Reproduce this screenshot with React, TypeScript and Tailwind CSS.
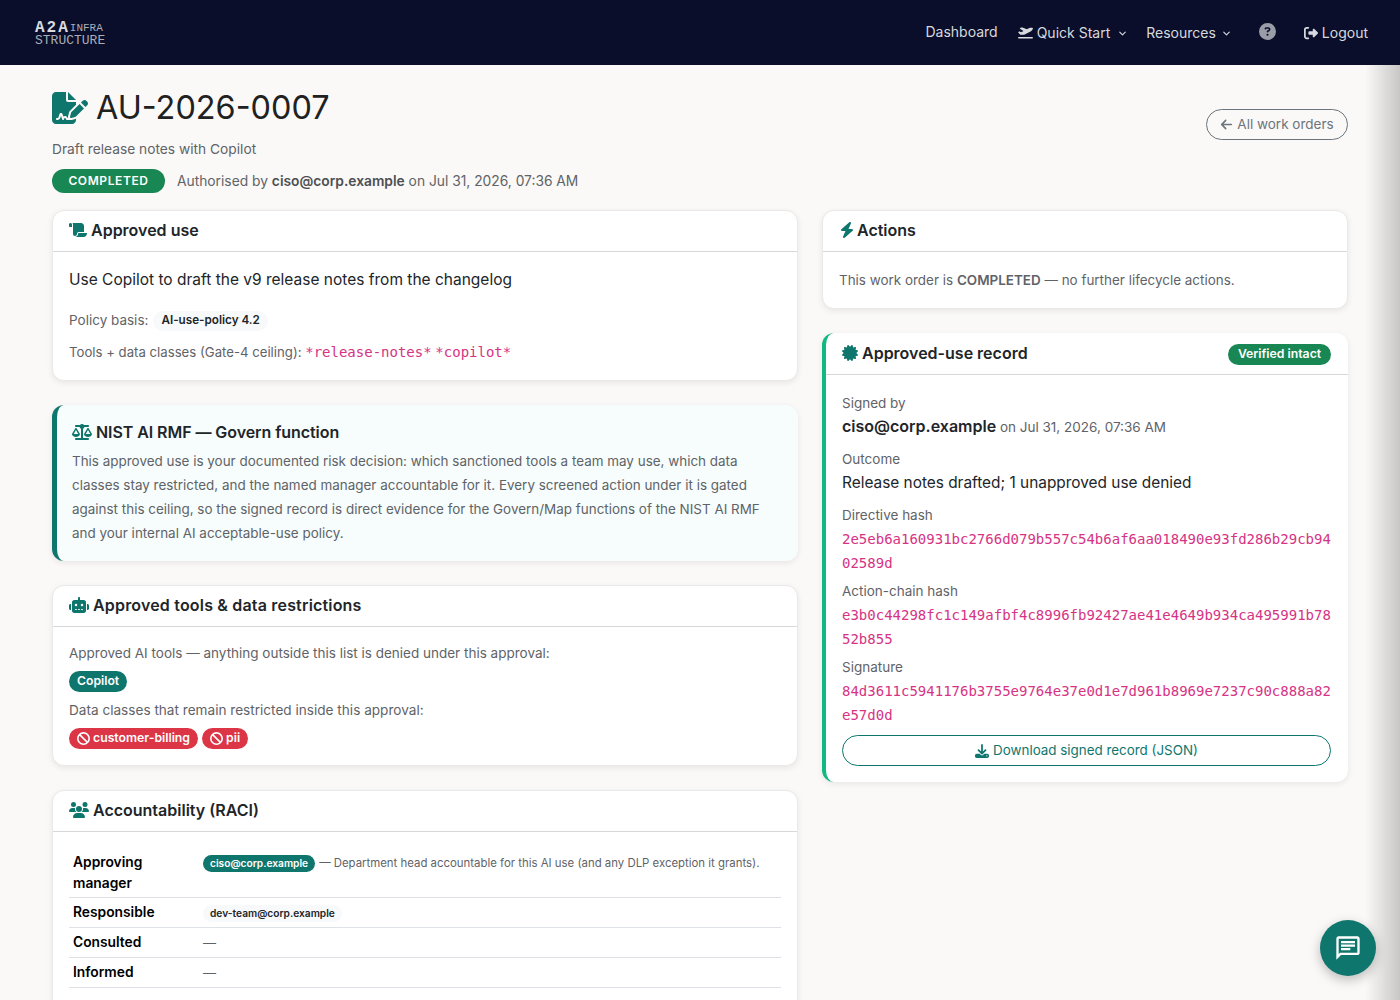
import React from "react";
import { FaFileSignature, FaPlaneDeparture, FaCircleQuestion, FaRightFromBracket, FaArrowLeft, FaScroll, FaScaleBalanced, FaRobot, FaBan, FaUsers, FaBolt, FaCertificate, FaDownload } from "react-icons/fa6";
import { MdOutlineChat } from "react-icons/md";
import { ChevronDown } from "lucide-react";

const mono = "font-['DejaVu_Sans_Mono',monospace] text-[14px] text-[#d63384]";

function Card({ children, className = "" }: { children: React.ReactNode; className?: string }) {
  return <section className={"bg-white rounded-[12px] border border-[#e9e9e9] shadow-[0_2px_6px_rgba(0,0,0,0.08)] overflow-hidden " + className}>{children}</section>;
}

function CardHead({ icon, title, wide }: { icon: React.ReactNode; title: React.ReactNode; wide?: boolean }) {
  return (
    <header className="h-[41px] flex items-center px-4 pb-[2px] border-b border-[#d8d8d8]">
      <h2 className="flex items-center gap-[4px] text-[16px] font-semibold text-[#212529]">
        <span className={"text-[#0f766e] " + (wide ? "text-[20px]" : "text-[18px]")}>{icon}</span>
        {title}
      </h2>
    </header>
  );
}

function Hash({ label, value }: { label: string; value: string }) {
  return (
    <div className="mb-[4px]">
      <div className="text-[13.5px] leading-[24px] text-[#5f6368]">{label}</div>
      <div className={mono + " leading-[24px] break-all"}>{value}</div>
    </div>
  );
}

function RaciRow({ name, children, tall }: { name: string; children: React.ReactNode; tall?: boolean }) {
  return (
    <div className={"flex border-b border-[#dee2e6] px-1 " + (tall ? "h-[49px] pt-1" : "h-[30px] items-center")}>
      <div className={"w-[130px] shrink-0 pr-2 text-[13.8px] font-semibold text-black leading-[21px] " + (tall ? "-mt-[1px]" : "")}>{name}</div>
      <div className={"flex items-center gap-[4px] leading-[21px] text-[11.4px] text-[#5f6368] " + (tall ? "h-[21px]" : "mt-[1px]")}>{children}</div>
    </div>
  );
}

export default function App() {
  return (
    <div className="relative h-[1000px] overflow-hidden bg-[#faf9f7] font-['Inter',sans-serif] text-[#212529]">
      <nav className="h-[65px] bg-[#0a0e2a] flex items-center justify-between pl-[35px] pr-[32px]">
        <div className="w-[70px] mt-[3px] flex flex-col text-[#c9ccd4] font-['Liberation_Mono',monospace] leading-none">
          <div className="flex items-center h-[13px]">
            <span className="text-[16px] font-bold tracking-[2px] leading-[13px] text-[#d8dade]">A2A</span>
            <span className="text-[11px] leading-[13px] text-[#a9adb8]">INFRA</span>
          </div>
          <span className="text-[13px] leading-[11px] text-[#a9adb8]">STRUCTURE</span>
        </div>
        <div className="flex items-center text-[14px] text-[#d7d9de]">
          <span className="mr-[20px] relative -top-[1px]">Dashboard</span>
          <span className="flex items-center gap-[4px] mr-[18px]"><FaPlaneDeparture className="text-[15px]" />Quick Start<ChevronDown strokeWidth={2.5} className="w-[11px] h-[11px] ml-[3px] mt-[2px]" /></span>
          <span className="flex items-center mr-[27px]">Resources<ChevronDown strokeWidth={2.5} className="w-[11px] h-[11px] ml-[5px] mt-[2px]" /></span>
          <FaCircleQuestion className="text-[17px] text-[#9a9ca8] mr-[28px] relative -top-[1px]" />
          <span className="flex items-center gap-[4px]"><FaRightFromBracket className="text-[14px]" />Logout</span>
        </div>
      </nav>

      <main className="px-[52px]">
        <div className="flex items-start justify-between h-[145px]">
          <div>
            <h1 className="flex items-center gap-[8px] pt-[25px] text-[32.4px] leading-[36px] text-[#212121] font-normal">
              <FaFileSignature className="text-[#0f766e] text-[32px] w-[36px]" />
              AU-2026-0007
            </h1>
            <p className="mt-[13px] text-[13.75px] leading-[21px] text-[#5f6368]">Draft release notes with Copilot</p>
            <div className="mt-[9px] flex items-center gap-3 text-[13.8px] text-[#5f6368]">
              <span className="h-[24px] w-[113px] flex items-center justify-center rounded-full bg-[#198754] text-white text-[12px] font-semibold tracking-[0.6px]">COMPLETED</span>
              <span>Authorised by <b className="font-semibold text-[#4d4f53]">ciso@corp.example</b> on Jul 31, 2026, 07:36 AM</span>
            </div>
          </div>
          <a className="mt-[44px] h-[31px] w-[142px] flex items-center justify-center gap-[4px] rounded-full border border-[#6c757d] text-[#6c757d] text-[13.5px]"><FaArrowLeft className="text-[13px]" />All work orders</a>
        </div>

        <div className="grid grid-cols-[746px_526px] gap-x-6 items-start">
          <div className="flex flex-col gap-[24px]">
            <Card className="h-[171px]">
              <CardHead icon={<FaScroll />} title="Approved use" />
              <div className="px-4 pt-[16px]">
                <p className="text-[15.5px] leading-[24px]">Use Copilot to draft the v9 release notes from the changelog</p>
                <div className="mt-[18px] flex items-center gap-[4px] text-[13.5px] leading-[21px] text-[#5f6368]">
                  Policy basis:
                  <span className="ml-[1px] h-[20px] px-2 flex items-center rounded-full bg-[#f8f9fa] text-[#212529] text-[11.7px] font-semibold">AI-use-policy 4.2</span>
                </div>
                <p className="mt-[11px] text-[13.2px] leading-[21px] text-[#5f6368]">Tools + data classes (Gate-4 ceiling): <span className={mono}>*release-notes*</span> <span className={mono}>*copilot*</span></p>
              </div>
            </Card>

            <section className="h-[156px] rounded-[12px] bg-[#f6fdfc] border-l-[5px] border-[#0f766e] shadow-[0_2px_6px_rgba(0,0,0,0.08)] pl-[15px] pr-[20px] pt-[15px]">
              <h2 className="flex items-center gap-1 text-[16px] leading-[24px] font-semibold tracking-[-0.07px]"><FaScaleBalanced className="text-[#0f766e] text-[20px]" />NIST AI RMF — Govern function</h2>
              <p className="mt-[5px] text-[13.45px] leading-[24px] text-[#5f6368]">This approved use is your documented risk decision: which sanctioned tools a team may use, which data classes stay restricted, and the named manager accountable for it. Every screened action under it is gated against this ceiling, so the signed record is direct evidence for the Govern/Map functions of the NIST AI RMF and your internal AI acceptable-use policy.</p>
            </section>

            <Card className="h-[181px]">
              <CardHead wide icon={<FaRobot />} title={<span className="tracking-[0.18px]">Approved tools &amp; data restrictions</span>} />
              <div className="px-4 pt-[14px]">
                <p className="text-[13.5px] leading-[24px] text-[#5f6368]">Approved AI tools — anything outside this list is denied under this approval:</p>
                <span className="mt-[6px] inline-flex h-[21px] items-center px-2 rounded-full bg-[#0f766e] text-white text-[12.2px] font-semibold">Copilot</span>
                <p className="mt-[6px] text-[13.6px] leading-[24px] text-[#5f6368]">Data classes that remain restricted inside this approval:</p>
                <div className="mt-[6px] flex gap-[4px]">
                  <span className="inline-flex h-[21px] items-center gap-[3px] px-2 rounded-full bg-[#dc3545] text-white text-[12.25px] font-semibold"><FaBan className="text-[13px]" />customer-billing</span>
                  <span className="inline-flex h-[21px] items-center gap-[3px] px-2 rounded-full bg-[#dc3545] text-white text-[12.25px] font-semibold"><FaBan className="text-[13px]" />pii</span>
                </div>
              </div>
            </Card>

            <Card className="h-[260px]">
              <CardHead wide icon={<FaUsers />} title="Accountability (RACI)" />
              <div className="px-4 pt-[17px]">
                <RaciRow name="Approving manager" tall>
                  <span className="h-[17px] px-[7px] flex items-center rounded-full bg-[#0f766e] text-white text-[10.2px] font-semibold">ciso@corp.example</span>
                  <span>— Department head accountable for this AI use (and any DLP exception it grants).</span>
                </RaciRow>
                <RaciRow name="Responsible">
                  <span className="h-[17px] px-[7px] flex items-center rounded-full bg-[#f8f9fa] text-[#212529] text-[10.2px] font-semibold">dev-team@corp.example</span>
                </RaciRow>
                <RaciRow name="Consulted"><span className="text-[13px]">—</span></RaciRow>
                <RaciRow name="Informed"><span className="text-[13px]">—</span></RaciRow>
              </div>
            </Card>
          </div>

          <div className="flex flex-col gap-[24px]">
            <Card className="h-[99px]">
              <CardHead icon={<FaBolt className="text-[16px] -mr-[2px]" />} title="Actions" />
              <p className="px-4 pt-[18px] text-[13.45px] leading-[21px] text-[#5f6368]">This work order is <b className="font-semibold">COMPLETED</b> — no further lifecycle actions.</p>
            </Card>

            <section className="h-[449px] rounded-[12px] bg-white border-l-[4px] border-[#10b981] shadow-[0_2px_6px_rgba(0,0,0,0.08)] overflow-hidden">
              <header className="h-[42px] flex items-center justify-between pl-4 pr-[17px] pb-[2px] border-b border-[#d8d8d8]">
                <h2 className="flex items-center gap-1 text-[16px] font-semibold"><FaCertificate className="text-[#0f766e]" />Approved-use record</h2>
                <span className="mt-[4px] h-[21px] w-[103px] flex items-center justify-center rounded-full bg-[#198754] text-white text-[12.25px] font-semibold">Verified intact</span>
              </header>
              <div className="pl-4 pr-[17px] pt-[17px]">
                <div className="text-[13.5px] leading-[22px] text-[#5f6368]">Signed by</div>
                <div className="leading-[24px] text-[13.5px] text-[#5f6368]"><b className="text-[16px] font-semibold text-[#212529]">ciso@corp.example</b> on Jul 31, 2026, 07:36 AM</div>
                <div className="mt-[9px] text-[13.5px] leading-[23px] text-[#5f6368]">Outcome</div>
                <div className="text-[15.4px] leading-[24px]">Release notes drafted; 1 unapproved use denied</div>
                <div className="mt-[8px]"><Hash label="Directive hash" value="2e5eb6a160931bc2766d079b557c54b6af6aa018490e93fd286b29cb9402589d" /></div>
                <Hash label="Action-chain hash" value="e3b0c44298fc1c149afbf4c8996fb92427ae41e4649b934ca495991b7852b855" />
                <Hash label="Signature" value="84d3611c5941176b3755e9764e37e0d1e7d961b8969e7237c90c888a82e57d0d" />
                <a className="mt-[8px] h-[31px] flex items-center justify-center gap-[4px] rounded-full border border-[#0f766e] text-[#0f766e] text-[13.4px]"><FaDownload className="text-[14px]" />Download signed record (JSON)</a>
              </div>
            </section>
          </div>
        </div>
      </main>

      <div className="absolute top-[65px] right-0 bottom-0 w-[35px] bg-gradient-to-r from-transparent to-black/20 pointer-events-none" />
      <button className="absolute right-[24px] bottom-[24px] w-[56px] h-[56px] rounded-full bg-[#0f766e] text-white flex items-center justify-center shadow-[0_4px_12px_rgba(0,0,0,0.25)]">
        <MdOutlineChat className="text-[28px]" />
      </button>
    </div>
  );
}
